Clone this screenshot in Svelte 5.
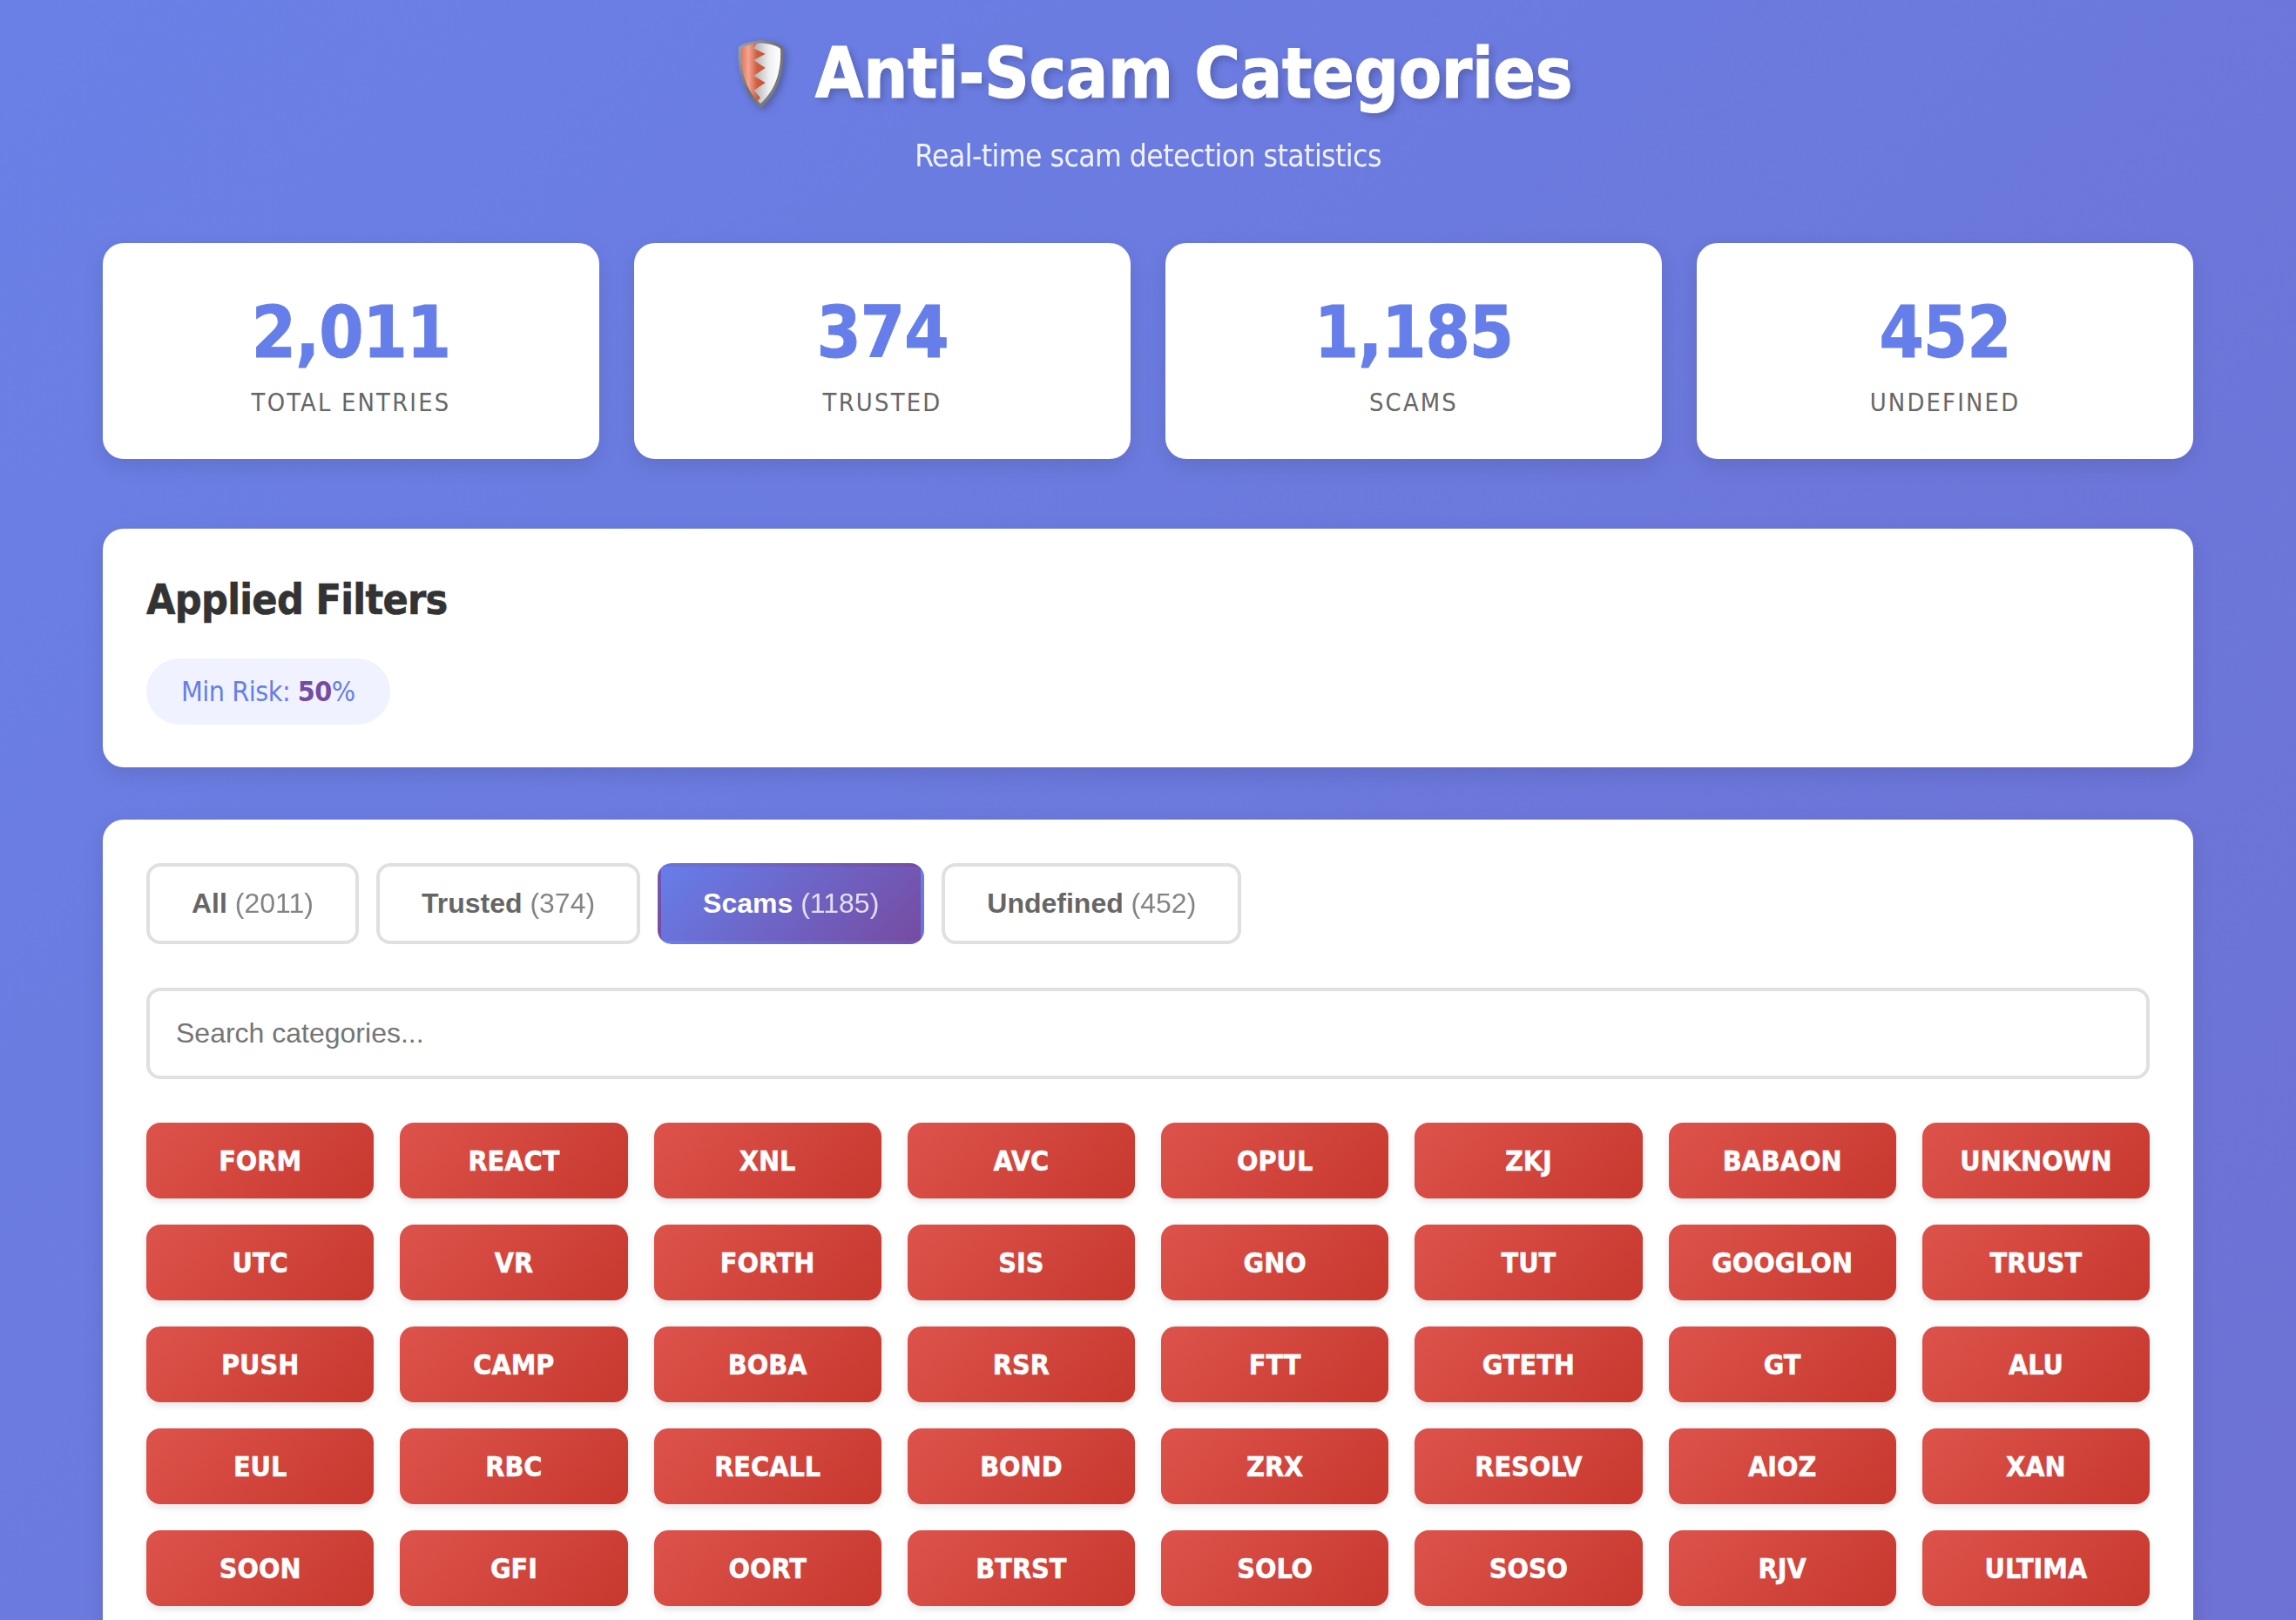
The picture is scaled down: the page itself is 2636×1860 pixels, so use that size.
<script lang="ts">
	const stats = [
		{ value: '2,011', label: 'Total Entries' },
		{ value: '374', label: 'Trusted' },
		{ value: '1,185', label: 'Scams' },
		{ value: '452', label: 'Undefined' }
	];

	const tabs = [
		{ name: 'All', count: 2011 },
		{ name: 'Trusted', count: 374 },
		{ name: 'Scams', count: 1185 },
		{ name: 'Undefined', count: 452 }
	];

	let active = $state('Scams');

	const tokens = [
		'FORM', 'REACT', 'XNL', 'AVC', 'OPUL', 'ZKJ', 'BABAON', 'UNKNOWN',
		'UTC', 'VR', 'FORTH', 'SIS', 'GNO', 'TUT', 'GOOGLON', 'TRUST',
		'PUSH', 'CAMP', 'BOBA', 'RSR', 'FTT', 'GTETH', 'GT', 'ALU',
		'EUL', 'RBC', 'RECALL', 'BOND', 'ZRX', 'RESOLV', 'AIOZ', 'XAN',
		'SOON', 'GFI', 'OORT', 'BTRST', 'SOLO', 'SOSO', 'RJV', 'ULTIMA'
	];
</script>

<div class="page">
	<header class="header">
		<h1>
			<svg class="shield" viewBox="0 0 56 78" aria-hidden="true">
				<defs>
					<linearGradient id="rim" x1="0" y1="0" x2="1" y2="1">
						<stop offset="0" stop-color="#a5a5a8" />
						<stop offset="0.5" stop-color="#6f6f73" />
						<stop offset="1" stop-color="#85858a" />
					</linearGradient>
					<linearGradient id="steel" x1="0" y1="0" x2="1" y2="0">
						<stop offset="0.35" stop-color="#b4b4b7" />
						<stop offset="0.7" stop-color="#eeeef0" />
						<stop offset="1" stop-color="#ffffff" />
					</linearGradient>
					<linearGradient id="red" x1="0" y1="0" x2="1" y2="0">
						<stop offset="0" stop-color="#e0765c" />
						<stop offset="0.3" stop-color="#f4a591" />
						<stop offset="0.65" stop-color="#cf5e40" />
						<stop offset="1" stop-color="#c9522f" />
					</linearGradient>
				</defs>
				<path d="M28 0 C38 1 48 3 53 8 C55 34 49 60 27 78 C6 60 0 34 2 8 C8 3 18 1 28 0Z" fill="url(#rim)" />
				<path d="M28 3.500 C37 4 45 6 50 10 C51 33 46 56 27 73 C10 56 4 33 5 10 C11 6 19 4 28 3.500Z" fill="url(#steel)" />
				<path
					d="M23 4 C16 4.500 10 7 5 10 C4 33 10 56 24 70 L 27 66 L 19.300 58 L 32.700 49 L 19.300 41 L 32.700 32 L 19.300 23 L 32.700 16 L 19.300 9.500Z"
					fill="url(#red)"
				/>
			</svg>
			<span>Anti-Scam Categories</span>
		</h1>
		<p class="subtitle">Real-time scam detection statistics</p>
	</header>

	<section class="stats">
		{#each stats as stat}
			<div class="stat-card">
				<div class="stat-value">{stat.value}</div>
				<div class="stat-label">{stat.label}</div>
			</div>
		{/each}
	</section>

	<section class="panel filters">
		<h2>Applied Filters</h2>
		<span class="pill">Min Risk: <strong>50</strong>%</span>
	</section>

	<section class="panel main">
		<div class="tabs">
			{#each tabs as tab}
				<button class="tab" class:active={active === tab.name} onclick={() => (active = tab.name)}>
					{tab.name} <span class="count">({tab.count})</span>
				</button>
			{/each}
		</div>

		<input class="search" type="text" placeholder="Search categories..." />

		<div class="grid">
			{#each tokens as token}
				<div class="token">{token}</div>
			{/each}
		</div>
	</section>
</div>

<style>
	:global(html),
	:global(body) {
		margin: 0;
		height: 100%;
		overflow: hidden;
	}

	.page {
		box-sizing: border-box;
		height: 100vh;
		overflow: hidden;
		padding: 0 118px;
		font-family: 'DejaVu Sans Condensed', 'DejaVu Sans', sans-serif;
		font-stretch: condensed;
		background: linear-gradient(135deg, #6a80e6 0%, #764ba2 100%) no-repeat;
		background-size: 100% 14000px;
	}

	.header {
		text-align: center;
		color: #fff;
		padding-top: 32px;
		margin-bottom: 76px;
	}

	h1 {
		display: flex;
		justify-content: center;
		align-items: center;
		gap: 34px;
		margin: 0 0 17px 15px;
		font-size: 80px;
		line-height: 106px;
		font-weight: 700;
		letter-spacing: -0.35px;
		-webkit-text-stroke: 1px #fff;
		text-shadow: 4px 4px 8px rgba(0, 0, 0, 0.2);
	}

	.shield {
		width: 56px;
		height: 78px;
		filter: drop-shadow(3px 3px 4px rgba(0, 0, 0, 0.25));
	}

	.subtitle {
		margin: 0;
		font-size: 35.2px;
		line-height: 48px;
		letter-spacing: -0.58px;
		opacity: 0.9;
	}

	.stats {
		display: grid;
		grid-template-columns: repeat(4, 1fr);
		gap: 40px;
		margin-bottom: 80px;
	}

	.stat-card {
		height: 248px;
		box-sizing: border-box;
		padding-top: 55px;
		background: #fff;
		border-radius: 24px;
		text-align: center;
		box-shadow: 0 8px 24px rgba(0, 0, 0, 0.1);
	}

	.stat-value {
		font-size: 82px;
		line-height: 96px;
		font-weight: 700;
		letter-spacing: -1px;
		-webkit-text-stroke: 1px #667eea;
		color: #667eea;
	}

	.stat-label {
		margin-top: 13px;
		font-size: 28.8px;
		line-height: 38px;
		letter-spacing: 2.2px;
		text-transform: uppercase;
		color: #666;
	}

	.panel {
		box-sizing: border-box;
		background: #fff;
		border-radius: 24px;
		padding: 50px;
		box-shadow: 0 8px 24px rgba(0, 0, 0, 0.1);
	}

	.filters {
		height: 274px;
		margin-bottom: 60px;
	}

	h2 {
		margin: 0 0 37px;
		font-size: 48px;
		line-height: 62px;
		font-weight: 700;
		letter-spacing: -0.7px;
		-webkit-text-stroke: 0.6px #333;
		color: #333;
	}

	.pill {
		display: inline-block;
		padding: 16px 40px;
		border-radius: 40px;
		background: #f0f2ff;
		color: #667eea;
		font-size: 32px;
		line-height: 44px;
		letter-spacing: -0.5px;
	}

	.pill strong {
		color: #764ba2;
	}

	.tabs {
		display: flex;
		gap: 20px;
		margin-bottom: 50px;
	}

	.tab {
		height: 93px;
		padding: 0 48px;
		border: 4px solid #e0e0e0;
		border-radius: 16px;
		background: #fff;
		color: #666;
		font-family: 'Liberation Sans', Arial, sans-serif;
		font-size: 32px;
		font-weight: 700;
	}

	.tab.active {
		border-color: transparent;
		background: linear-gradient(135deg, #667eea 0%, #764ba2 100%);
		color: #fff;
	}

	.count {
		font-weight: 400;
		opacity: 0.8;
	}

	.search {
		display: block;
		box-sizing: border-box;
		width: 100%;
		height: 105px;
		padding: 0 30px;
		border: 4px solid #e0e0e0;
		border-radius: 16px;
		font-family: 'Liberation Sans', Arial, sans-serif;
		font-size: 32px;
		margin-bottom: 50px;
		outline: none;
	}

	.grid {
		display: grid;
		grid-template-columns: repeat(8, 1fr);
		gap: 30px;
	}

	.token {
		height: 87px;
		display: flex;
		align-items: center;
		justify-content: center;
		border-radius: 16px;
		background: linear-gradient(135deg, #dd534b 0%, #c7382e 100%);
		color: #fff;
		font-size: 32px;
		font-weight: 700;
		-webkit-text-stroke: 0.5px #fff;
		box-shadow: 0 4px 8px rgba(0, 0, 0, 0.1);
	}
</style>
